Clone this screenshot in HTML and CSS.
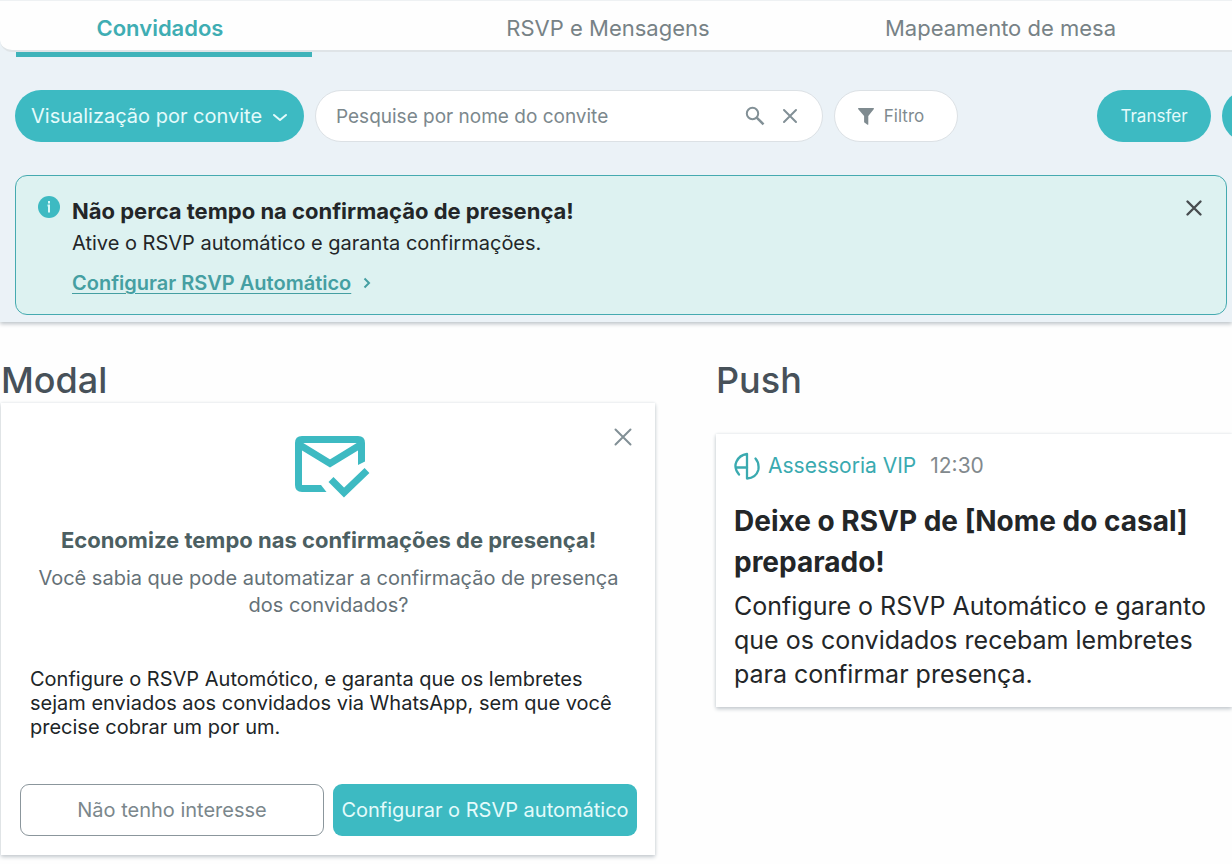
FILE: index.html
```html
<!DOCTYPE html>
<html lang="pt-BR">
<head>
<meta charset="utf-8">
<meta name="viewport" content="width=device-width, initial-scale=1">
<title>Convidados</title>
<link rel="stylesheet" href="styles.css">
</head>
<body>
<header class="panel">
  <nav class="tabs">
    <a class="tab tab-guests active" href="#convidados" aria-current="page">Convidados</a>
    <a class="tab tab-rsvp" href="#rsvp">RSVP e Mensagens</a>
    <a class="tab tab-map" href="#mesa">Mapeamento de mesa</a>
  </nav>
  <div class="toolbar">
    <button class="pill view" type="button"><span>Visualização por convite</span>
      <svg width="16" height="16" viewBox="0 0 16 16" fill="none" stroke="currentColor" stroke-width="2" stroke-linecap="round" stroke-linejoin="round"><path d="M2 7l6 5 6-5"/></svg>
    </button>
    <form class="search">
      <input class="search-input" type="text" aria-label="Pesquisar convite" placeholder="Pesquise por nome do convite">
      <button class="icon-btn" type="submit" aria-label="Pesquisar"><svg width="20" height="20" viewBox="0 0 20 20" fill="none" stroke="currentColor" stroke-width="2"><circle cx="7.5" cy="7.5" r="5.7"/><path d="M11.7 11.7l6.8 6.6" stroke-width="2.5"/></svg></button>
      <button class="icon-btn" type="reset" aria-label="Limpar"><svg width="20" height="20" viewBox="0 0 20 20" fill="none" stroke="currentColor" stroke-width="2" stroke-linecap="round"><path d="M4 4l12 12M16 4L4 16"/></svg></button>
    </form>
    <button class="filter" type="button"><svg width="16" height="17" viewBox="0 0 16 17" fill="currentColor"><path d="M.3 0h15.400q.4.500 0 1.200L10.300 8v8.200q0 .8-.8.500L6.100 14.200V8L.3 1.200Q-.1.500.3 0z"/></svg><span>Filtro</span></button>
    <button class="pill transfer" type="button">Transfer</button>
    <button class="pill more" type="button" aria-label="Mais ações"></button>
  </div>
  <section class="notice">
    <svg class="notice-icon" width="22" height="22" viewBox="0 0 22 22"><circle cx="11" cy="11" r="11" fill="#3dbac2"/><path d="M11 5v2.500M9.500 9.500H11v7" fill="none" stroke="#d9f8f8" stroke-width="2"/></svg>
    <div class="notice-body">
      <h2 class="notice-title">Não perca tempo na confirmação de presença!</h2>
      <p class="notice-text">Ative o RSVP automático e garanta confirmações.</p>
      <a class="notice-link" href="#rsvp"><span>Configurar RSVP Automático</span><svg width="8" height="12" viewBox="0 0 8 12" fill="none" stroke="currentColor" stroke-width="2"><path d="M1.500 1.500L6 6l-4.500 4.500"/></svg></a>
    </div>
    <button class="icon-btn dark" type="button" aria-label="Fechar aviso"><svg width="20" height="20" viewBox="0 0 20 20" fill="none" stroke="currentColor" stroke-width="2.400" stroke-linecap="round"><path d="M3.500 3.500l13 13M16.500 3.500l-13 13"/></svg></button>
  </section>
</header>
<main class="samples">
  <section class="sample">
    <h2 class="sample-title">Modal</h2>
    <div class="modal">
      <button class="icon-btn modal-close" type="button" aria-label="Fechar"><svg width="20" height="20" viewBox="0 0 20 20" fill="none" stroke="currentColor" stroke-width="2" stroke-linecap="round"><path d="M2.500 2.500l15 15M17.500 2.500l-15 15"/></svg></button>
      <svg class="mail" width="82" height="64" viewBox="-6 0 82 64" fill="none" stroke="#3dbac2" stroke-width="7"><path d="M27 53.500H8q-3.500 0-3.500-3.500V8q0-3.500 3.500-3.500H64q3.500 0 3.500 3.500v18"/><path d="M5 9.500l31 19 31-19"/><path d="M37 44.500l13 13L73 35.500"/><path d="M26 50h1l5.500 7H26z" fill="#3dbac2" stroke="none"/><path d="M64 22h7v4.500L64 30z" fill="#3dbac2" stroke="none"/></svg>
      <h3 class="modal-title">Economize tempo nas confirmações de presença!</h3>
      <p class="modal-lead">Você sabia que pode automatizar a confirmação de presença<br>dos convidados?</p>
      <p class="modal-text">Configure o RSVP Automótico, e garanta que os lembretes<br>sejam enviados aos convidados via WhatsApp, sem que você<br>precise cobrar um por um.</p>
      <div class="actions">
        <button class="btn outline" type="button">Não tenho interesse</button>
        <button class="btn solid" type="button">Configurar o RSVP automático</button>
      </div>
    </div>
  </section>
  <section class="sample">
    <h2 class="sample-title">Push</h2>
    <article class="push">
      <div class="push-head">
        <svg width="26" height="28" viewBox="0 0 26 28" fill="none" stroke="#3aaab0" stroke-width="2.300" stroke-linecap="round" stroke-linejoin="round"><path d="M5 22.500Q-.5 16 2.500 9.500 5.500 3 13 2v24.500q9-.5 11.300-8.500Q25.500 11 21.500 6.500"/><path d="M2.500 15.500H13"/></svg>
        <span class="push-app">Assessoria VIP</span>
        <time class="push-time">12:30</time>
      </div>
      <h3 class="push-title">Deixe o RSVP de [Nome do casal]<br>preparado!</h3>
      <p class="push-text">Configure o RSVP Automático e garanto<br>que os convidados recebam lembretes<br>para confirmar presença.</p>
    </article>
  </section>
</main>
</body>
</html>
```
FILE: styles.css
```css
* { box-sizing: border-box; }
body { margin: 0; background: #fefefe; color: #232628; font-family: Inter, "Liberation Sans", sans-serif; overflow-x: hidden; }
h2, h3, p { margin: 0; }
button, input { font: inherit; color: inherit; }
button { border: 0; padding: 0; background: none; cursor: pointer; }
svg { display: block; flex: none; }

.panel { background: #ebf2f7; overflow: hidden; padding-bottom: 7px; box-shadow: 0 2px 4px #bcc3c8; }
.tabs { display: grid; grid-template-columns: 320fr 92fr 392fr 393fr 35fr; height: 52px; background: #fefefe; border-top: 1px solid #eef1f3; border-bottom: 2px solid #dfe4e7; border-bottom-left-radius: 12px; }
.tab { display: flex; align-items: center; justify-content: center; height: 56px; padding-bottom: 2px; font-size: 22px; color: #778286; text-decoration: none; white-space: nowrap; }
.tab-guests { grid-column: 1; }
.tab-rsvp { grid-column: 3; }
.tab-map { grid-column: 4; }
.active { position: relative; color: #3fadb3; font-weight: 600; }
.active::after { content: ""; position: absolute; left: 16px; right: 8px; bottom: 0; height: 5px; background: #3fb3ba; }

.toolbar { display: flex; align-items: center; gap: 11px; margin: 38px -104px 0 15px; }
.pill { flex: none; height: 52px; border-radius: 26px; background: #3dbac2; color: #e4fbfb; }
.view { display: flex; align-items: center; justify-content: space-between; width: 289px; padding: 0 16px; font-size: 20px; white-space: nowrap; }
.search { display: flex; align-items: center; gap: 15px; flex: 0 1 508px; height: 52px; padding: 0 22px 0 20px; background: #fff; border: 1px solid #dce1e5; border-radius: 26px; color: #87949a; }
.search-input { flex: 1; min-width: 0; padding: 0; border: 0; outline: 0; background: none; font-size: 19px; }
.search-input::placeholder { color: #7c888d; opacity: 1; }
.filter { display: flex; align-items: center; justify-content: center; gap: 10px; flex: none; width: 124px; height: 52px; padding-right: 10px; background: #fff; border: 1px solid #dce1e5; border-radius: 26px; color: #7f8b90; font-size: 17px; }
.transfer { width: 114px; margin-left: auto; font-size: 17px; }
.more { width: 114px; }
.icon-btn { color: #829096; }

.notice { display: flex; align-items: flex-start; margin: 33px 5px 0 15px; padding: 20px 22px 16px; background: #ddf2f1; border: 1px solid #45aab0; border-radius: 12px; }
.notice-body { flex: 1; margin-left: 12px; }
.notice-title { font-size: 22px; line-height: 30px; font-weight: 700; }
.notice-text { font-size: 20px; line-height: 34px; }
.notice-link { display: inline-flex; align-items: center; gap: 12px; margin-top: 8px; font-size: 20px; line-height: 30px; font-weight: 600; color: #459fa2; text-decoration: none; }
.notice-link span { text-decoration: underline; text-decoration-thickness: 1px; text-underline-offset: 3px; }
.dark { color: #484d50; margin-top: 2px; }

.samples { display: grid; grid-template-columns: 654fr 516fr; column-gap: 61px; align-items: start; padding: 35px 0 10px 1px; }
.sample { min-width: 0; }
.sample-title { font-size: 36px; line-height: 46px; font-weight: 500; color: #475159; }
.modal, .push { background: #fff; box-shadow: 0 2px 4px #c3c9ce, 0 0 3px #e6eaed; }
.modal { display: flex; flex-direction: column; position: relative; padding: 32px 18px 19px 19px; }
.modal-close { position: absolute; top: 24px; right: 22px; }
.mail { align-self: center; }
.modal-title { margin-top: 26px; text-align: center; font-size: 22px; line-height: 30px; font-weight: 700; color: #4c5f62; }
.modal-lead { margin-top: 10px; text-align: center; font-size: 20px; line-height: 27px; color: #657177; white-space: nowrap; }
.modal-text { margin: 48px 0 0 10px; font-size: 20px; line-height: 24px; color: #202527; white-space: nowrap; }
.actions { display: grid; grid-template-columns: 1fr 1fr; gap: 9px; margin-top: 45px; }
.btn { height: 52px; border-radius: 9px; font-size: 20px; white-space: nowrap; }
.outline { border: 1px solid #8b969c; color: #7b878c; }
.solid { background: #3dbac2; color: #e4fbfb; }

.push { margin-top: 31px; padding: 18px 18px 16px; white-space: nowrap; }
.push-head { display: flex; align-items: center; gap: 8px; font-size: 21px; line-height: 28px; }
.push-app { color: #3aaab0; }
.push-time { margin-left: 6px; color: #82898d; }
.push-title { margin-top: 21px; font-size: 28px; line-height: 41px; font-weight: 700; }
.push-text { margin-top: 6px; font-size: 25px; line-height: 34px; }
```
